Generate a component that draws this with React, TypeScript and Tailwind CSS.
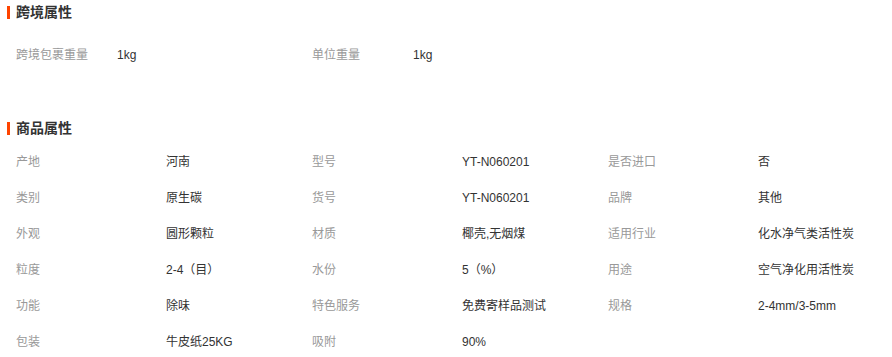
import React from 'react';

const font = { fontFamily: '"Liberation Sans", "Noto Sans CJK SC", sans-serif' };

const crossBorder = [
  ['跨境包裹重量', '1kg'],
  ['单位重量', '1kg'],
];

const productAttrs: [string, string][] = [
  ['产地', '河南'], ['型号', 'YT-N060201'], ['是否进口', '否'],
  ['类别', '原生碳'], ['货号', 'YT-N060201'], ['品牌', '其他'],
  ['外观', '圆形颗粒'], ['材质', '椰壳,无烟煤'], ['适用行业', '化水净气类活性炭'],
  ['粒度', '2-4（目）'], ['水份', '5（%）'], ['用途', '空气净化用活性炭'],
  ['功能', '除味'], ['特色服务', '免费寄样品测试'], ['规格', '2-4mm/3-5mm'],
  ['包装', '牛皮纸25KG'], ['吸附', '90%'],
];

const SectionTitle: React.FC<{ title: string }> = ({ title }) => (
  <div className="flex items-center h-6 pl-[7px]">
    <span className="w-[3px] h-[13px] bg-[#ff4400]" />
    <span className="ml-[6px] text-[14px] font-bold text-[#333]">{title}</span>
  </div>
);

export default function App() {
  return (
    <div className="w-[892px] h-[357px] overflow-hidden bg-white text-[12px]" style={font}>
      <SectionTitle title="跨境属性" />
      <div className="mt-[13px] pl-4 flex">
        {crossBorder.map(([k, v]) => (
          <div key={k} className="flex items-center h-9 w-[296px]">
            <span className="w-[101px] text-[#999]">{k}</span>
            <span className="text-[#333]">{v}</span>
          </div>
        ))}
      </div>
      <div className="mt-[43px]">
        <SectionTitle title="商品属性" />
      </div>
      <div className="mt-1 pl-4 grid grid-cols-[296px_296px_296px]">
        {productAttrs.map(([k, v]) => (
          <div key={k} className="flex items-center h-9">
            <span className="w-[150px] shrink-0 text-[#999]">{k}</span>
            <span className="text-[#333] whitespace-nowrap">{v}</span>
          </div>
        ))}
      </div>
    </div>
  );
}
